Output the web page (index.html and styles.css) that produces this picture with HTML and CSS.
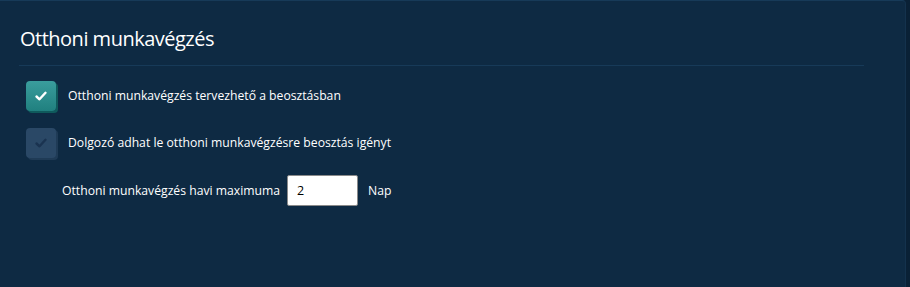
FILE: index.html
```html
<!DOCTYPE html>
<html lang="hu">
<head>
<meta charset="utf-8">
<link rel="stylesheet" href="styles.css">
</head>
<body>
<div class="panel">
  <h2 class="title">Otthoni munkavégzés</h2>
  <div class="content">
    <label class="check-row">
      <span class="box box-on">
        <svg viewBox="0 0 14 14" width="14" height="14"><path d="M2.5 7.5 L5.5 10.3 L11.5 3.8" fill="none" stroke="#ffffff" stroke-width="2.4" stroke-linecap="round" stroke-linejoin="round"/></svg>
      </span>
      <span class="label">Otthoni munkavégzés tervezhető a beosztásban</span>
    </label>
    <label class="check-row">
      <span class="box box-off">
        <svg viewBox="0 0 14 14" width="14" height="14"><path d="M2.5 7.5 L5.5 10.3 L11.5 3.8" fill="none" stroke="#1a3350" stroke-width="2.4" stroke-linecap="round" stroke-linejoin="round"/></svg>
      </span>
      <span class="label">Dolgozó adhat le otthoni munkavégzésre beosztás igényt</span>
    </label>
    <div class="field-row">
      <span class="label">Otthoni munkavégzés havi maximuma</span>
      <input class="num" type="text" value="2">
      <span class="label">Nap</span>
    </div>
  </div>
</div>
</body>
</html>
```
FILE: styles.css
```css
html, body {
  margin: 0;
  padding: 0;
  background: #0a2136;
  width: 910px;
  height: 287px;
  overflow: hidden;
}
.panel {
  width: 906px;
  height: 287px;
  box-sizing: border-box;
  background: #0e2a43;
  border-top: 1px solid #173a58;
  border-right: 1px solid #14324d;
  border-top-right-radius: 4px;
  padding: 0 41px 0 19px;
  font-family: "Open Sans", "Noto Sans", sans-serif;
  color: #ffffff;
}
.title {
  margin: 0;
  padding: 24px 0 0 1px;
  height: 40px;
  font-size: 20px;
  letter-spacing: -0.5px;
  font-weight: 500;
  line-height: 28px;
  border-bottom: 1px solid #173a58;
  box-sizing: content-box;
}
.content {
  padding: 14px 0 0 7px;
  display: flex;
  flex-direction: column;
}
.check-row {
  display: flex;
  align-items: center;
  gap: 12px;
  height: 32px;
  margin-bottom: 15px;
}
.box {
  width: 30px;
  height: 30px;
  border-radius: 4px;
  display: flex;
  align-items: center;
  justify-content: center;
  box-sizing: border-box;
}
.box-on {
  background: linear-gradient(#3a9d9d, #20807f);
  box-shadow: 2px 2px 0 #0f5a5c;
}
.box-off {
  background: #2a4866;
  box-shadow: 2px 2px 0 #1f3b56;
}
.label {
  font-size: 12.2px;
  line-height: 16px;
}
.field-row {
  display: flex;
  align-items: center;
  height: 31px;
  padding-left: 36px;
  margin-top: 1px;
}
.num {
  width: 71px;
  height: 31px;
  box-sizing: border-box;
  margin: 0 10px 0 7px;
  border: 1px solid #8a8a8a;
  border-radius: 2px;
  padding: 0 9px;
  font-family: "Open Sans", sans-serif;
  font-size: 12.5px;
  color: #000;
  background: #fff;
}
```
